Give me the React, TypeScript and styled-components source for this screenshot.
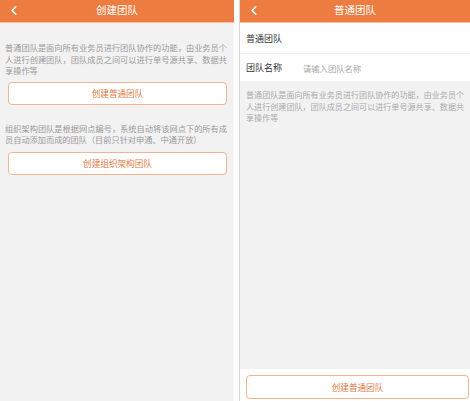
import React from "react";
import styled, { createGlobalStyle } from "styled-components";

const Global = createGlobalStyle`
  html, body { margin: 0; padding: 0; background: #ffffff; }
  body { font-family: "Noto Sans CJK SC", "Noto Sans", sans-serif; }
  * { box-sizing: border-box; }
`;

const Stage = styled.div`
  display: flex;
  width: 470px;
  height: 401px;
  gap: 5px;
  background: #ffffff;
  overflow: hidden;
`;

const Screen = styled.div<{ $w: number; $border?: boolean }>`
  width: ${(p) => p.$w}px;
  height: 401px;
  display: flex;
  flex-direction: column;
  background: #f2f2f2;
  border-left: ${(p) => (p.$border ? "1px solid #d9d9d9" : "none")};
`;

const Header = styled.div`
  position: relative;
  height: 23px;
  flex: none;
  background: #ec7c40;
  border-bottom: 1px solid #f3c2a5;
  display: flex;
  align-items: center;
  justify-content: center;
  color: #ffffff;
  font-size: 10.5px;
  line-height: 1;
  padding-bottom: 2px;
`;

const Back = styled.svg`
  position: absolute;
  left: 11px;
  top: 6px;
`;

const Content = styled.div`
  padding: 19px 7px 0 5px;
  display: flex;
  flex-direction: column;
`;

const Desc = styled.p<{ $size: number; $color: string }>`
  margin: 0;
  font-size: ${(p) => p.$size}px;
  line-height: 11.5px;
  color: ${(p) => p.$color};
  text-align: justify;
`;

const OutlineButton = styled.div<{ $mt: number; $ml: number }>`
  margin-top: ${(p) => p.$mt}px;
  margin-left: ${(p) => p.$ml}px;
  height: 23px;
  border: 1px solid #efb494;
  border-radius: 4px;
  background: #ffffff;
  color: #e07a45;
  font-size: 8.6px;
  display: flex;
  align-items: center;
  justify-content: center;
`;

const Section = styled.div<{ $mt: number }>`
  margin-top: ${(p) => p.$mt}px;
  display: flex;
  flex-direction: column;
`;

const Row = styled.div<{ $h: number }>`
  height: ${(p) => p.$h}px;
  background: #ffffff;
  display: flex;
  align-items: center;
  padding-left: 6px;
  font-size: 9px;
  color: #333333;
`;

const Divider = styled.div`
  height: 1px;
  background: #f0f0f0;
`;

const Placeholder = styled.span`
  margin-left: 21px;
  color: #a8a8a8;
  font-size: 8.3px;
`;

const RightBody = styled.div`
  flex: 1;
  padding: 8px 6px 0 6px;
`;

const Footer = styled.div`
  height: 32px;
  flex: none;
  background: #ffffff;
  padding: 6px 1px 0 6px;
`;

const FooterButton = styled(OutlineButton)`
  height: 24px;
`;

const Chevron = () => (
  <Back width="6" height="9" viewBox="0 0 6 9">
    <polyline points="4.8,0.8 1.2,4.5 4.8,8.2" fill="none" stroke="#ffffff" strokeWidth="1.6" strokeLinecap="round" strokeLinejoin="round" />
  </Back>
);

export default function App() {
  return (
    <>
      <Global />
      <Stage>
        <Screen $w={234}>
          <Header>
            <Chevron />
            创建团队
          </Header>
          <Content>
            <Desc $size={8.2} $color="#9a9a9a">
              普通团队是面向所有业务员进行团队协作的功能，由业务员个人进行创建团队，团队成员之间可以进行单号源共享、数据共享操作等
            </Desc>
            <OutlineButton $mt={5} $ml={3}>创建普通团队</OutlineButton>
            <Section $mt={18}>
              <Desc $size={8.2} $color="#9a9a9a">
                组织架构团队是根据网点编号，系统自动将该网点下的所有成员自动添加而成的团队（目前只针对申通、中通开放）
              </Desc>
              <OutlineButton $mt={6} $ml={3}>创建组织架构团队</OutlineButton>
            </Section>
          </Content>
        </Screen>
        <Screen $w={231} $border>
          <Header>
            <Chevron />
            普通团队
          </Header>
          <Row $h={30}>普通团队</Row>
          <Divider />
          <Row $h={27}>
            团队名称
            <Placeholder>请输入团队名称</Placeholder>
          </Row>
          <RightBody>
            <Desc $size={8.05} $color="#aaaaaa">
              普通团队是面向所有业务员进行团队协作的功能，由业务员个人进行创建团队，团队成员之间可以进行单号源共享、数据共享操作等
            </Desc>
          </RightBody>
          <Footer>
            <FooterButton $mt={0} $ml={0}>创建普通团队</FooterButton>
          </Footer>
        </Screen>
      </Stage>
    </>
  );
}
